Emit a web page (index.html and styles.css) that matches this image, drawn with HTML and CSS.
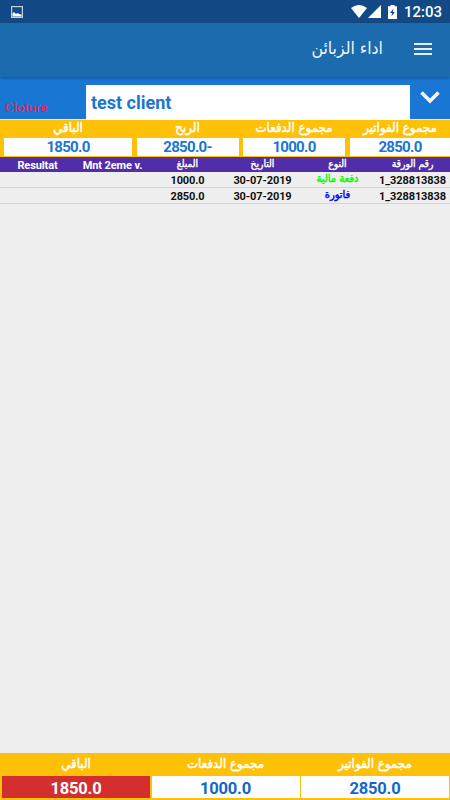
FILE: index.html
```html
<!DOCTYPE html>
<html lang="ar">
<head>
    <meta charset="UTF-8">
    <meta name="viewport" content="width=device-width, initial-scale=1.0">
    <title>اداء الزبائن</title>
    <link rel="stylesheet" href="styles.css">
</head>
<body>
    <div class="status-bar">
        <svg class="picture-icon" width="12" height="12" viewBox="0 0 12 12">
            <rect x="0.6" y="0.6" width="10.8" height="10.8" fill="none" stroke="#c3d0e2" stroke-width="1.2"/>
            <path d="M1.5 10.5V7.5l1.5-1.5 2 2 1.5-1 1.5 1 2.5.5v2z" fill="#fff"/>
        </svg>
        <div class="status-icons">
            <svg width="16" height="13" viewBox="0 0 16 13">
                <path d="M0 3Q8-3 16 3L8 13z" fill="#fff"/>
            </svg>
            <svg class="signal" width="13" height="13" viewBox="0 0 13 13">
                <path d="M13 0V13H0z" fill="#fff"/>
            </svg>
            <svg class="battery" width="9" height="14" viewBox="0 0 9 14">
                <path d="M2.5 0h4v1.3H9V14H0V1.3h2.5z" fill="#fff"/>
                <path d="M5.6 3.5L2 8h2.2l-.9 3.6L7 7H4.8z" fill="#134a86"/>
            </svg>
            <span class="clock">12:03</span>
        </div>
    </div>

    <header class="toolbar">
        <h1>اداء الزبائن</h1>
        <svg width="18" height="12" viewBox="0 0 18 12">
            <path d="M0 0h18v2H0zM0 5h18v2H0zM0 10h18v2H0z" fill="#e6eef5"/>
        </svg>
    </header>

    <div class="client-bar">
        <span class="cloture">Cloture</span>
        <div class="client-name">test client</div>
        <div class="arrow">
            <svg width="20" height="13" viewBox="0 0 20 13">
                <path d="M1.5 1.5L10 10L18.5 1.5" fill="none" stroke="#f5f9fd" stroke-width="3.6"/>
            </svg>
        </div>
    </div>

    <div class="summary">
        <div class="total"><span class="label">الباقي</span><span class="value">1850.0</span></div>
        <div class="total"><span class="label">الربح</span><span class="value">2850.0-</span></div>
        <div class="total"><span class="label">مجموع الدفعات</span><span class="value">1000.0</span></div>
        <div class="total"><span class="label">مجموع الفواتير</span><span class="value">2850.0</span></div>
    </div>

    <div class="list">
        <div class="row head">
            <span>Resultat</span>
            <span>Mnt 2eme v.</span>
            <span class="ar">المبلغ</span>
            <span class="ar">التاريخ</span>
            <span class="ar">النوع</span>
            <span class="ar">رقم الورقة</span>
        </div>
        <div class="row">
            <span></span>
            <span></span>
            <span>1000.0</span>
            <span>30-07-2019</span>
            <span class="ar payment">دفعة مالية</span>
            <span>1_328813838</span>
        </div>
        <div class="row">
            <span></span>
            <span></span>
            <span>2850.0</span>
            <span>30-07-2019</span>
            <span class="ar invoice">فاتورة</span>
            <span>1_328813838</span>
        </div>
    </div>

    <footer class="footer">
        <div class="total"><span class="label">الباقي</span><span class="value rest">1850.0</span></div>
        <div class="total"><span class="label">مجموع الدفعات</span><span class="value">1000.0</span></div>
        <div class="total"><span class="label">مجموع الفواتير</span><span class="value">2850.0</span></div>
    </footer>
</body>
</html>
```
FILE: styles.css
```css
* {
    box-sizing: border-box;
}

body {
    margin: 0;
    height: 100vh;
    display: flex;
    flex-direction: column;
    overflow: hidden;
    background-color: #eee;
    font-family: Roboto, "DejaVu Sans Condensed", "DejaVu Sans", sans-serif;
    white-space: nowrap;
}

svg {
    display: block;
    flex: none;
}

.status-bar {
    height: 23px;
    flex: none;
    display: flex;
    justify-content: space-between;
    align-items: center;
    padding: 0 8px 0 11px;
    background-color: #134a86;
    color: #fff;
}

.status-icons {
    display: flex;
    align-items: center;
}

.status-icons .signal {
    margin-left: 1px;
}

.status-icons .battery {
    margin: 0 7px;
}

.clock {
    font-size: 15px;
    font-weight: 500;
    line-height: 24px;
    width: 38px;
}

.toolbar {
    height: 54px;
    flex: none;
    display: flex;
    justify-content: flex-end;
    align-items: center;
    gap: 31px;
    padding: 0 18px 3px 0;
    background-color: #1c6bae;
    box-shadow: 0 1px 3px rgba(0, 0, 0, 0.3);
    z-index: 1;
}

.toolbar h1 {
    margin: 0 0 2px;
    font-family: "DejaVu Sans Condensed", "DejaVu Sans", sans-serif;
    font-stretch: condensed;
    font-size: 17.5px;
    font-weight: 400;
    color: #eef4f9;
    direction: rtl;
}

.client-bar {
    height: 43px;
    flex: none;
    display: grid;
    grid-template-columns: 86px 324px 40px;
    padding-top: 8px;
    background-color: #1976d2;
    border-bottom: 1px solid #ffe3b0;
}

.cloture {
    align-self: end;
    padding: 0 0 4px 5px;
    font-size: 13.3px;
    line-height: 18px;
    color: #f81c50;
}

.client-name {
    padding-left: 5px;
    background-color: #fff;
    color: #1976d2;
    font-size: 18px;
    font-weight: 700;
    line-height: 36px;
}

.arrow {
    padding: 6px 0 0 10px;
}

.summary {
    height: 37px;
    flex: none;
    display: grid;
    grid-template-columns: 128px 102px 102px 101px;
    column-gap: 4.5px;
    padding: 0 0 1px 4px;
    background-color: #ffc107;
}

.total {
    display: flex;
    flex-direction: column;
    text-align: center;
    min-width: 0;
}

.label,
.ar {
    font-family: "DejaVu Sans Condensed", "DejaVu Sans", sans-serif;
    font-stretch: condensed;
    font-weight: 400;
    direction: rtl;
    -webkit-text-stroke: 0.4px currentColor;
}

.label {
    height: 18px;
    line-height: 16px;
    font-size: 13.2px;
    color: #fff;
}

.value {
    height: 18px;
    line-height: 18px;
    font-size: 15px;
    font-weight: 700;
    letter-spacing: -0.7px;
    background-color: #fff;
    color: #1976d2;
}

.list {
    flex: 1;
}

.row {
    height: 16px;
    display: grid;
    grid-template-columns: repeat(6, 75px);
    border-bottom: 1px solid #d3d3d3;
    text-align: center;
    font-size: 11px;
    letter-spacing: -0.1px;
    font-weight: 700;
    line-height: 18px;
    color: #111;
}

.row.head {
    height: 15px;
    border-bottom: 0;
    background-color: #512da8;
    color: #fff;
    line-height: 17px;
}

.row .ar {
    font-size: 11px;
    letter-spacing: 0;
    line-height: 14px;
}

.row.head .ar {
    font-size: 10.2px;
}

.payment {
    color: #0f0;
}

.invoice {
    color: #00f;
}

.footer {
    height: 47px;
    flex: none;
    display: grid;
    grid-template-columns: repeat(3, 1fr);
    column-gap: 1.5px;
    padding: 0 1px 0 2px;
    background-color: #ffc107;
}

.footer .label {
    height: 23px;
    line-height: 22px;
}

.footer .value {
    height: 22px;
    line-height: 25px;
    font-size: 16.5px;
    letter-spacing: -0.2px;
    color: #1467c8;
}

.footer .rest {
    background-color: #d32f2f;
    color: #fff;
}
```
